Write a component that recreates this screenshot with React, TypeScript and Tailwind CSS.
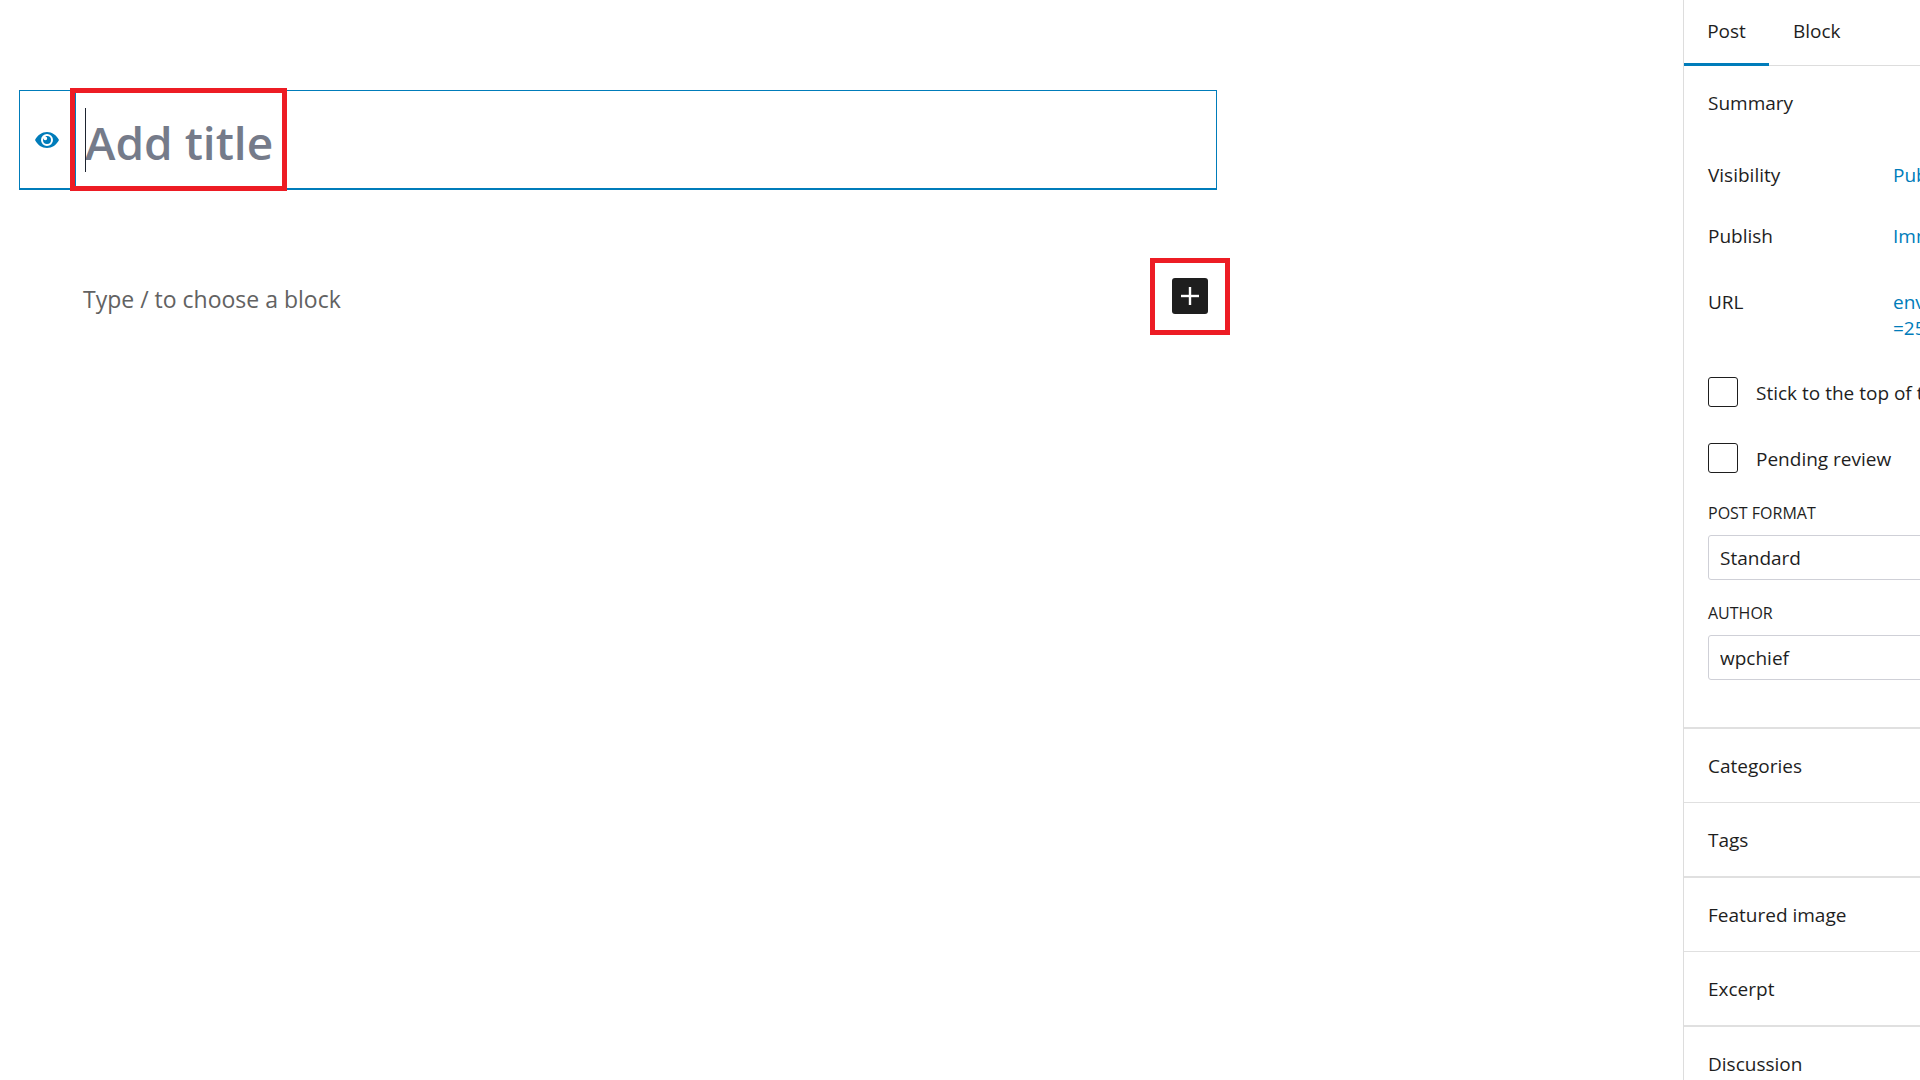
import { useState } from "react";
import clsx from "clsx";

const PANELS = ["Categories", "Tags", "Featured image", "Excerpt", "Discussion"];

const EyeIcon = () => (
  <svg width="24" height="16" viewBox="0 0 24 16" aria-hidden="true">
    <path
      fill="#007cba"
      fillRule="evenodd"
      d="M12 0C17 0 21.500 3 24 8C21.500 13 17 16 12 16S2.500 13 0 8C2.500 3 7 0 12 0ZM12 2A6 6 0 1 0 12 14A6 6 0 1 0 12 2Z"
    />
    <path
      fill="#007cba"
      d="M12 4A4 4 0 1 1 8 8C8 7.400 8.100 6.900 8.400 6.300A1.900 1.900 0 1 0 10.300 4.400C10.800 4.100 11.400 4 12 4Z"
    />
  </svg>
);

const PlusIcon = () => (
  <svg width="18" height="18" viewBox="0 0 18 18" aria-hidden="true">
    <path d="M0 9H18" stroke="#fff" strokeWidth="2.400" />
    <path d="M9 0V18" stroke="#fff" strokeWidth="2.400" />
  </svg>
);

const SummaryRow = ({
  label,
  value,
  className,
}: {
  label: string;
  value: string;
  className?: string;
}) => (
  <div className={clsx("flex", className)}>
    <span className="w-[185px] shrink-0">{label}</span>
    <a href="#" className="w-40 whitespace-pre-line text-[#007cba]">
      {value}
    </a>
  </div>
);

const Checkbox = ({ id, label }: { id: string; label: string }) => (
  <div className="flex items-center gap-[18px]">
    <input
      id={id}
      type="checkbox"
      className="size-[30px] shrink-0 appearance-none rounded-[3px] border border-[#1e1e1e] bg-white"
    />
    <label htmlFor={id} className="whitespace-nowrap pt-0.5">
      {label}
    </label>
  </div>
);

const SelectField = ({
  id,
  label,
  value,
}: {
  id: string;
  label: string;
  value: string;
}) => (
  <div>
    <label htmlFor={id} className="block text-[16px]/[20px] uppercase">
      {label}
    </label>
    <select
      id={id}
      className="mt-3 h-[45px] w-full appearance-none rounded-[3px] border border-[#cfd0d7] bg-white px-[11px]"
    >
      <option>{value}</option>
    </select>
  </div>
);

const Editor = () => {
  const [title, setTitle] = useState("");

  return (
    <main className="min-w-0 flex-1 pl-[19px] pt-[90px]">
      <div className="w-full max-w-[1198px]">
        <div className="relative flex h-[100px] border border-b-2 border-[#007cba]">
          <div className="flex w-14 items-center justify-center border-r border-[#007cba] pr-0.5">
            <EyeIcon />
          </div>
          <input
            aria-label="Add title"
            placeholder="Add title"
            value={title}
            onChange={(e) => setTitle(e.target.value)}
            className="min-w-0 flex-1 pl-[9px] pt-1.5 text-[46px] font-semibold outline-none placeholder:text-[#757b8a]"
          />
          <span className="absolute left-[65px] top-[17px] h-16 w-px bg-[#1e2430]" />
          <span className="pointer-events-none absolute -top-[3px] left-[50px] h-[103px] w-[217px] border-5 border-[#ed1c24]" />
        </div>
        <div className="flex items-start justify-between pl-16 pt-[88px]">
          <p className="text-[23px]/[42px] text-[#626262]">
            Type / to choose a block
          </p>
          <button
            aria-label="Add block"
            className="relative mr-[9px] flex size-9 items-center justify-center rounded-[3px] bg-[#1e1e1e]"
          >
            <PlusIcon />
            <span className="pointer-events-none absolute -left-[22px] -top-5 h-[77px] w-20 border-5 border-[#ed1c24]" />
          </button>
        </div>
      </div>
    </main>
  );
};

const Sidebar = () => (
  <aside className="w-[237px] shrink-0 overflow-hidden border-l border-[#ddd] text-[19px]/[26px] text-[#1e1e1e]">
    <div className="w-[420px]">
      <div className="flex h-[66px] border-b border-[#ddd]">
        <button className="-mb-px w-[85px] border-b-3 border-[#007cba] pb-0.5">
          Post
        </button>
        <button className="px-6 pb-1">Block</button>
      </div>
      <div className="px-6 pb-[47px] pt-6">
        <h2>Summary</h2>
        <SummaryRow label="Visibility" value="Public" className="mt-[46px]" />
        <SummaryRow label="Publish" value="Immediately" className="mt-[35px]" />
        <SummaryRow label="URL" value={"env\n=25"} className="mt-10" />
        <div className="mt-9 flex flex-col gap-9">
          <Checkbox id="sticky" label="Stick to the top of the blog" />
          <Checkbox id="pending" label="Pending review" />
        </div>
        <div className="mt-[30px] flex flex-col gap-[23px]">
          <SelectField id="format" label="Post format" value="Standard" />
          <SelectField id="author" label="Author" value="wpchief" />
        </div>
      </div>
      {PANELS.map((panel, i) => (
        <button
          key={panel}
          className={clsx(
            "block w-full border-[#e0e0e0] px-6 pt-0.5 text-left leading-[71px]",
            i % 2 ? "border-t" : "border-t-2",
          )}
        >
          {panel}
        </button>
      ))}
    </div>
  </aside>
);

const App = () => (
  <div className="flex h-screen overflow-hidden bg-white font-['Open_Sans','Noto_Sans',sans-serif]">
    <Editor />
    <Sidebar />
  </div>
);

export default App;
